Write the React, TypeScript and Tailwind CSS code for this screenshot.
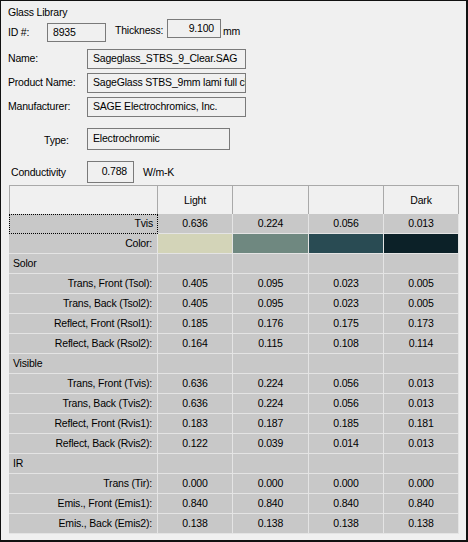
import React from 'react';

const font = "font-['Liberation_Sans',Arial,sans-serif]";

type Row =
  | { kind: 'section'; label: string }
  | { kind: 'data'; label: string; values: string[]; focus?: boolean }
  | { kind: 'color'; label: string };

const rows: Row[] = [
  { kind: 'data', label: 'Tvis', values: ['0.636', '0.224', '0.056', '0.013'], focus: true },
  { kind: 'color', label: 'Color:' },
  { kind: 'section', label: 'Solor' },
  { kind: 'data', label: 'Trans, Front (Tsol):', values: ['0.405', '0.095', '0.023', '0.005'] },
  { kind: 'data', label: 'Trans, Back (Tsol2):', values: ['0.405', '0.095', '0.023', '0.005'] },
  { kind: 'data', label: 'Reflect, Front (Rsol1):', values: ['0.185', '0.176', '0.175', '0.173'] },
  { kind: 'data', label: 'Reflect, Back (Rsol2):', values: ['0.164', '0.115', '0.108', '0.114'] },
  { kind: 'section', label: 'Visible' },
  { kind: 'data', label: 'Trans, Front (Tvis):', values: ['0.636', '0.224', '0.056', '0.013'] },
  { kind: 'data', label: 'Trans, Back (Tvis2):', values: ['0.636', '0.224', '0.056', '0.013'] },
  { kind: 'data', label: 'Reflect, Front (Rvis1):', values: ['0.183', '0.187', '0.185', '0.181'] },
  { kind: 'data', label: 'Reflect, Back (Rvis2):', values: ['0.122', '0.039', '0.014', '0.013'] },
  { kind: 'section', label: 'IR' },
  { kind: 'data', label: 'Trans (Tir):', values: ['0.000', '0.000', '0.000', '0.000'] },
  { kind: 'data', label: 'Emis., Front (Emis1):', values: ['0.840', '0.840', '0.840', '0.840'] },
  { kind: 'data', label: 'Emis., Back (Emis2):', values: ['0.138', '0.138', '0.138', '0.138'] },
];

const swatches = ['bg-[#d3d4b8]', 'bg-[#6f8880]', 'bg-[#294b53]', 'bg-[#0c2128]'];

const cell = 'h-[20px] bg-[#c8c8c8] border-r border-b border-[#e4e4e4] flex items-center';

const Box = ({ className, children }: { className: string; children?: React.ReactNode }) => (
  <div className={`border border-[#7a7a7a] bg-[#f0f0f0] overflow-hidden whitespace-nowrap ${className}`}>
    {children}
  </div>
);

export default function App() {
  return (
    <div className={`w-[468px] h-[542px] bg-[#f0f0f0] border-t border-l border-r-2 border-b-2 border-[#111] text-[10.5px] tracking-[-0.2px] text-black ${font} overflow-hidden`}>
      <div className="ml-[7px] mt-[5px] h-[13px] leading-[13px]">Glass Library</div>

      {/* ID / thickness */}
      <div className="flex items-start h-[23px] ml-[7px]">
        <div className="w-[39px] mt-[4px] h-[19px] flex items-center">ID #:</div>
        <Box className="w-[59px] h-[19px] mt-[4px] pl-[5px] flex items-center">8935</Box>
        <div className="ml-[9px] w-[52px] mt-[2px] h-[19px] flex items-center">Thickness:</div>
        <Box className="w-[54px] h-[19px] pr-[6px] flex items-center justify-end">9.100</Box>
        <div className="ml-[2px] mt-[3px] h-[19px] flex items-center">mm</div>
      </div>

      {/* text fields */}
      <div className="ml-[7px] mt-[7px] flex flex-col gap-[4px]">
        {[
          ['Name:', 'Sageglass_STBS_9_Clear.SAG'],
          ['Product Name:', 'SageGlass STBS_9mm lami full clear'],
          ['Manufacturer:', 'SAGE Electrochromics, Inc.'],
        ].map(([label, value]) => (
          <div key={label} className="flex items-center h-[20px]">
            <div className="w-[79px]">{label}</div>
            <Box className="w-[159px] h-[20px] pl-[5px] flex items-center">{value}</Box>
          </div>
        ))}
      </div>

      {/* type */}
      <div className="mt-[11px] flex items-start h-[22px]">
        <div className="w-[86px] pl-[43px] h-[22px] mt-[2px] flex items-center">Type:</div>
        <Box className="w-[143px] h-[22px] pl-[5px] pt-[3px] leading-[13px]">Electrochromic</Box>
      </div>

      {/* conductivity */}
      <div className="mt-[11px] flex items-start h-[22px]">
        <div className="w-[86px] pl-[10px] h-[22px] mt-[1px] flex items-center">Conductivity</div>
        <Box className="w-[47px] h-[22px] pr-[6px] pt-[3px] leading-[13px] text-right">0.788</Box>
        <div className="ml-[9px] h-[22px] mt-[1px] flex items-center">W/m-K</div>
      </div>

      {/* property grid */}
      <div className="ml-[8px] mt-[2px] grid grid-cols-[149px_75px_76px_75px_75px]">
        {['', 'Light', '', '', 'Dark'].map((h, i) => (
          <div
            key={i}
            className={`h-[29px] border-t border-r border-[#a9a9a9] bg-[#f0f0f0] flex items-center justify-center pt-[1px] ${i === 0 ? 'border-l' : ''}`}
          >
            {h}
          </div>
        ))}
        {rows.map((row, r) => {
          if (row.kind === 'section') {
            return (
              <React.Fragment key={r}>
                <div className={`${cell} pl-[4px]`}>{row.label}</div>
                {[0, 1, 2, 3].map((c) => (
                  <div key={c} className={cell} />
                ))}
              </React.Fragment>
            );
          }
          if (row.kind === 'color') {
            return (
              <React.Fragment key={r}>
                <div className={`${cell} justify-end pr-[5px]`}>{row.label}</div>
                {swatches.map((s, c) => (
                  <div key={c} className={`h-[20px] border-r border-b border-[#e4e4e4] ${s}`} />
                ))}
              </React.Fragment>
            );
          }
          return (
            <React.Fragment key={r}>
              <div
                className={
                  row.focus
                    ? 'h-[20px] bg-[#c8c8c8] border border-dotted border-black flex items-center justify-end pr-[4px]'
                    : `${cell} justify-end pr-[5px]`
                }
              >
                {row.label}
              </div>
              {row.values.map((v, c) => (
                <div key={c} className={`${cell} justify-center`}>
                  {v}
                </div>
              ))}
            </React.Fragment>
          );
        })}
      </div>
    </div>
  );
}
